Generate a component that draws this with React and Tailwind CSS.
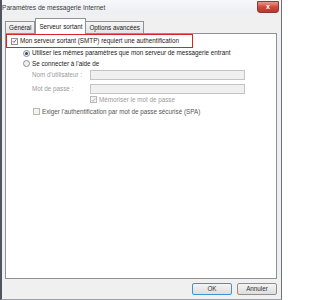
import React from 'react';

const font = { fontFamily: '"Liberation Sans", Arial, sans-serif' };

function Check({ checked, disabled }) {
  return (
    <span
      className={`flex h-[7px] w-[7px] items-center justify-center border ${
        disabled ? 'border-[#b8b8b8] bg-[#f4f4f4]' : 'border-[#8f8f8f] bg-[#f6f8fb]'
      }`}
    >
      {checked && (
        <svg viewBox="0 0 8 8" className="h-[6px] w-[6px]">
          <path d="M1.2 4.2 L3.1 6.2 L6.8 1.5" fill="none" stroke={disabled ? '#a0a0a0' : '#3a4f8a'} strokeWidth="1.3" />
        </svg>
      )}
    </span>
  );
}

function Radio({ checked }) {
  return (
    <span className="flex h-[7px] w-[7px] items-center justify-center rounded-full border border-[#8f8f8f] bg-[#eef0f3]">
      {checked && <span className="h-[3px] w-[3px] rounded-full bg-[#2c4a7a]" />}
    </span>
  );
}

export default function App() {
  return (
    <div style={font} className="flex h-[300px] w-[282px] flex-col border-l-[2px] border-r border-b border-l-[#4f565f] border-r-[#6b7178] border-b-[#9aa0a6] bg-[#f0f0f0] text-[6.3px] text-[#1a1a1a]">
      {/* title bar */}
      <div className="flex h-[14px] items-start bg-gradient-to-b from-[#f7f8fa] to-[#eceef1]">
        <div className="flex-1 pl-[0px] pt-[3px] text-[6.6px] text-[#3a3a3a]">Paramètres de messagerie Internet</div>
        <div className="mr-[2px] mt-[1px] flex h-[12px] w-[22px] items-center justify-center rounded-b-[3px] border border-[#8e3a33] bg-gradient-to-b from-[#e39a8f] via-[#cf4a3c] to-[#b9372c] text-[7px] font-bold text-white">
          x
        </div>
      </div>

      <div className="flex flex-1 flex-col pl-[3px] pr-[4px] pt-[4px]">
        {/* tabs */}
        <div className="flex h-[15px] items-end">
          <div className="flex h-[12px] items-center border border-b-0 border-[#8f929a] bg-gradient-to-b from-[#f6f6f6] to-[#e4e4e4] px-[3px] text-[#222]">
            Général
          </div>
          <div className="relative z-10 -mb-[1px] flex h-[16px] items-start border border-b-0 border-[#8f929a] bg-white px-[3px] pt-[3px]">
            Serveur sortant
          </div>
          <div className="flex h-[12px] items-center border border-b-0 border-l-0 border-[#8f929a] bg-gradient-to-b from-[#f6f6f6] to-[#e4e4e4] px-[3px] text-[#222]">
            Options avancées
          </div>
        </div>

        {/* panel */}
        <div className="flex h-[246px] flex-col border border-[#8f929a] bg-white">
          <div className="flex h-[14px] w-[187px] items-center gap-[2px] border-[1.5px] border-[#d8232a] pl-[4px]">
            <Check checked />
            <span>Mon serveur sortant (SMTP) requiert une authentification</span>
          </div>

          <div className="ml-[17px] flex h-[10px] items-center gap-[2px]">
            <Radio checked />
            <span>Utiliser les mêmes paramètres que mon serveur de messagerie entrant</span>
          </div>
          <div className="ml-[17px] flex h-[11px] items-center gap-[2px]">
            <Radio />
            <span className="font-medium">Se connecter à l'aide de</span>
          </div>

          <div className="ml-[26px] mt-[1px] flex h-[10px] items-center">
            <span className="w-[58px] text-[#9a9a9a]">Nom d'utilisateur :</span>
            <div className="h-[10px] w-[155px] border border-[#c4c4c4] bg-[#f0f0f0]" />
          </div>
          <div className="ml-[26px] mt-[4px] flex h-[10px] items-center">
            <span className="w-[58px] text-[#9a9a9a]">Mot de passe :</span>
            <div className="h-[10px] w-[155px] border border-[#c4c4c4] bg-[#f0f0f0]" />
          </div>

          <div className="ml-[84px] mt-[1px] flex h-[9px] items-center gap-[2px] text-[#9a9a9a]">
            <Check checked disabled />
            <span>Mémoriser le mot de passe</span>
          </div>
          <div className="ml-[27px] mt-[3px] flex h-[9px] items-center gap-[2px] text-[#8a8a8a]">
            <Check disabled />
            <span className="text-[#555]">Exiger l'authentification par mot de passe sécurisé (SPA)</span>
          </div>
        </div>

        {/* buttons */}
        <div className="flex h-[20px] items-center justify-end gap-[5px]">
          <div className="flex h-[12px] w-[40px] items-center justify-center rounded-[2px] border border-[#3c94d4] bg-gradient-to-b from-[#f4f4f4] to-[#dedede] text-[#333]">
            OK
          </div>
          <div className="flex h-[12px] w-[40px] items-center justify-center rounded-[2px] border border-[#8f8f8f] bg-gradient-to-b from-[#f4f4f4] to-[#dedede] text-[#333]">
            Annuler
          </div>
        </div>
      </div>
    </div>
  );
}
